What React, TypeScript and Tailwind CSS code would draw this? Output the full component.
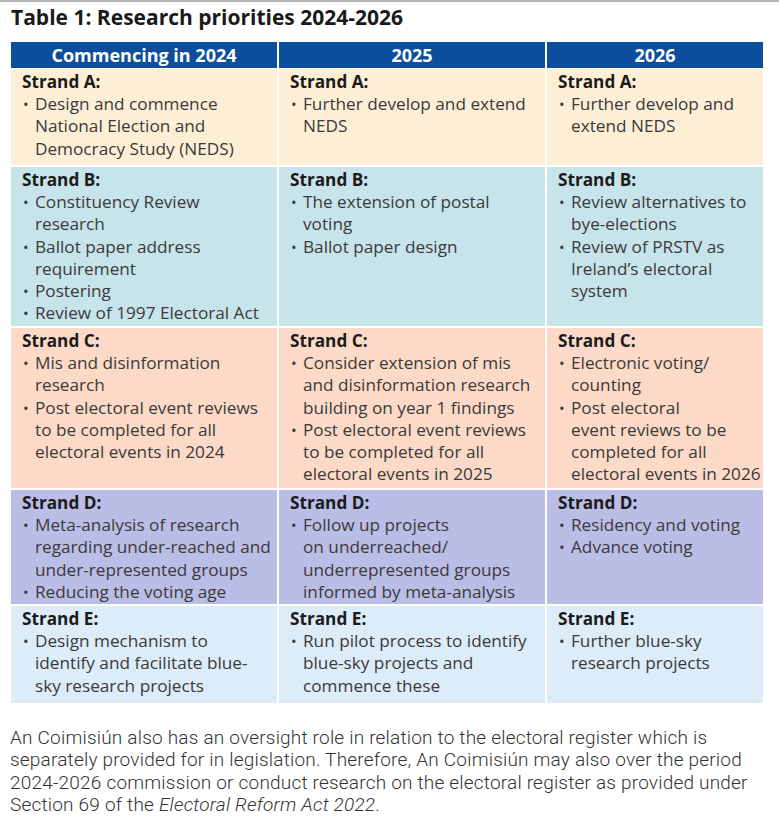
import React from "react";

type Cell = { label: string; items: React.ReactNode[] };
type Row = { bg: string; h: string; cells: Cell[] };

const rows: Row[] = [
  {
    bg: "bg-[#fdefd6]",
    h: "h-[96px]",
    cells: [
      { label: "Strand A:", items: ["Design and commence National Election and Democracy Study (NEDS)"] },
      { label: "Strand A:", items: ["Further develop and extend NEDS"] },
      { label: "Strand A:", items: ["Further develop and extend NEDS"] },
    ],
  },
  {
    bg: "bg-[#c6e4ea]",
    h: "h-[159px]",
    cells: [
      {
        label: "Strand B:",
        items: [
          <>
            Constituency Review
            <br />
            research
          </>,
          "Ballot paper address requirement",
          "Postering",
          "Review of 1997 Electoral Act",
        ],
      },
      { label: "Strand B:", items: ["The extension of postal voting", "Ballot paper design"] },
      {
        label: "Strand B:",
        items: ["Review alternatives to bye-elections", "Review of PRSTV as Ireland’s electoral system"],
      },
    ],
  },
  {
    bg: "bg-[#fcdac7]",
    h: "h-[160px]",
    cells: [
      {
        label: "Strand C:",
        items: [
          "Mis and disinformation research",
          "Post electoral event reviews to be completed for all electoral events in 2024",
        ],
      },
      {
        label: "Strand C:",
        items: [
          "Consider extension of mis and disinformation research building on year 1 findings",
          "Post electoral event reviews to be completed for all electoral events in 2025",
        ],
      },
      {
        label: "Strand C:",
        items: [
          "Electronic voting/ counting",
          <>
            Post electoral
            <br />
            event reviews to be completed for all electoral events in 2026
          </>,
        ],
      },
    ],
  },
  {
    bg: "bg-[#babde6]",
    h: "h-[114px]",
    cells: [
      {
        label: "Strand D:",
        items: [
          "Meta-analysis of research regarding under-reached and under-represented groups",
          "Reducing the voting age",
        ],
      },
      {
        label: "Strand D:",
        items: [
          <>
            Follow up projects
            <br />
            on underreached/ underrepresented groups informed by meta-analysis
          </>,
        ],
      },
      { label: "Strand D:", items: ["Residency and voting", "Advance voting"] },
    ],
  },
  {
    bg: "bg-[#dcecf8]",
    h: "h-[97px]",
    cells: [
      {
        label: "Strand E:",
        items: [
          <>
            Design mechanism to
            <br />
            identify and facilitate blue-
            <br />
            sky research projects
          </>,
        ],
      },
      {
        label: "Strand E:",
        items: ["Run pilot process to identify blue-sky projects and commence these"],
      },
      { label: "Strand E:", items: ["Further blue-sky research projects"] },
    ],
  },
];

function CellView({ cell }: { cell: Cell }) {
  return (
    <div className="pl-[11px] pr-[2px] pt-[2px]">
      <div className="font-bold text-[#1b1b1b]">{cell.label}</div>
      {cell.items.map((it, i) => (
        <div key={i} className="flex">
          <span className="w-[13px] shrink-0 pl-[1px] text-[15px]">•</span>
          <span>{it}</span>
        </div>
      ))}
    </div>
  );
}

export default function App() {
  return (
    <div className="w-[779px] h-[826px] bg-white relative overflow-hidden">
      <div className="h-[2px] bg-[#b5b5b5]" />
      <div
        className="pl-[11px] pt-[1px] text-[21px] font-bold text-[#1a1a1a] leading-[28px]"
        style={{ fontFamily: "'Open Sans', sans-serif" }}
      >
        Table 1: Research priorities 2024-2026
      </div>
      <div
        className="ml-[11px] mt-[11px] w-[752px] grid grid-cols-[266px_266px_216px] gap-x-[2px] text-[17.2px] leading-[22.2px] text-[#3a3a3a]"
        style={{ fontFamily: "'Open Sans', sans-serif" }}
      >
        {["Commencing in 2024", "2025", "2026"].map((h) => (
          <div
            key={h}
            className="h-[26px] mb-[1px] bg-[#0b4e9d] text-white font-bold text-center leading-[26px] text-[18px]"
          >
            {h}
          </div>
        ))}
        {rows.map((r, ri) =>
          r.cells.map((c, ci) => (
            <div key={`${ri}-${ci}`} className={`${r.bg} ${r.h} ${ri < rows.length - 1 ? "mb-[2px]" : ""}`}>
              <CellView cell={c} />
            </div>
          ))
        )}
      </div>
      <div
        className="ml-[10px] mt-[24px] w-[760px] text-[19px] leading-[22.3px] text-[#333333] font-light tracking-[0.2px]"
        style={{ fontFamily: "Roboto, 'Liberation Sans', sans-serif" }}
      >
        An Coimisiún also has an oversight role in relation to the electoral register which is
        separately provided for in legislation. Therefore, An Coimisiún may also over the period
        2024-2026 commission or conduct research on the electoral register as provided under
        Section 69 of the <i>Electoral Reform Act 2022</i>.
      </div>
    </div>
  );
}
